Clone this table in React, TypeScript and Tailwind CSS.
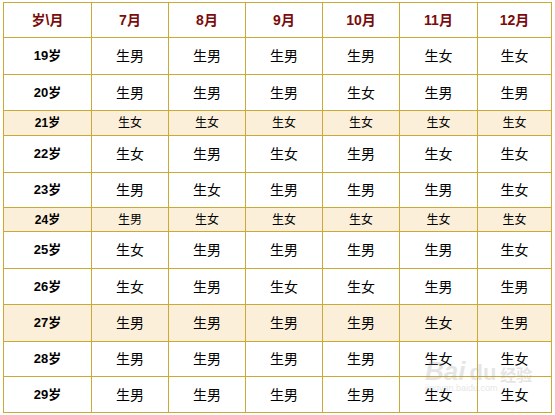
const months = ["7月", "8月", "9月", "10月", "11月", "12月"];

type Row = { age: string; cells: string; h: string; hl?: boolean; small?: boolean };

const rows: Row[] = [
  { age: "19岁", cells: "男男男男女女", h: "h-[37px]" },
  { age: "20岁", cells: "男男男女男男", h: "h-[36px]" },
  { age: "21岁", cells: "女女女女女女", h: "h-[25px]", hl: true, small: true },
  { age: "22岁", cells: "女男女男女女", h: "h-[37px]" },
  { age: "23岁", cells: "男女男男男女", h: "h-[35px]" },
  { age: "24岁", cells: "男女女女女女", h: "h-[24px]", hl: true, small: true },
  { age: "25岁", cells: "女男男男男女", h: "h-[37px]" },
  { age: "26岁", cells: "女男女女男男", h: "h-[36px]" },
  { age: "27岁", cells: "男男男男女男", h: "h-[37px]", hl: true },
  { age: "28岁", cells: "男男男男女女", h: "h-[35px]" },
  { age: "29岁", cells: "男男男男女女", h: "h-[36px]" },
];

const cellBorder = "border border-[#c9aa34]";

export default function App() {
  return (
    <div className="relative w-[555px] h-[415px] bg-white pl-[3px] pt-[2px] font-['Liberation_Sans','Noto_Sans_CJK_SC',sans-serif] text-black">
      <table className="w-[548px] table-fixed border-collapse">
        <colgroup>
          <col className="w-[88px]" />
          <col className="w-[77px]" />
          <col className="w-[77px]" />
          <col className="w-[77px]" />
          <col className="w-[77px]" />
          <col className="w-[78px]" />
          <col className="w-[74px]" />
        </colgroup>
        <thead>
          <tr className="h-[35px]">
            <th className={`${cellBorder} text-[14px] font-bold text-[#7a0c0c]`}>岁\月</th>
            {months.map((m) => (
              <th key={m} className={`${cellBorder} text-[14px] font-bold text-[#7a0c0c]`}>
                {m}
              </th>
            ))}
          </tr>
        </thead>
        <tbody>
          {rows.map((r) => (
            <tr key={r.age} className={`${r.h} ${r.hl ? "bg-[#fcefd9]" : "bg-white"}`}>
              <td className={`${cellBorder} text-center font-bold ${r.small ? "text-[12px]" : "text-[13px]"}`}>
                {r.age}
              </td>
              {r.cells.split("").map((c, i) => (
                <td
                  key={i}
                  className={`${cellBorder} p-0 text-center leading-none ${r.small ? "text-[12px]" : "text-[14px]"}`}
                >
                  生{c}
                </td>
              ))}
            </tr>
          ))}
        </tbody>
      </table>

      {/* faint watermark */}
      <div className="pointer-events-none absolute left-[425px] top-[358px] flex flex-col items-start text-[#9a9a9a] opacity-25">
        <div className="flex items-end gap-1 leading-none">
          <span className="text-[26px] font-bold italic">Bai</span>
          <span className="text-[22px] font-bold">du</span>
          <span className="text-[16px] font-bold">经验</span>
        </div>
        <span className="text-[9px] leading-none">jingyan.baidu.com</span>
      </div>
    </div>
  );
}
